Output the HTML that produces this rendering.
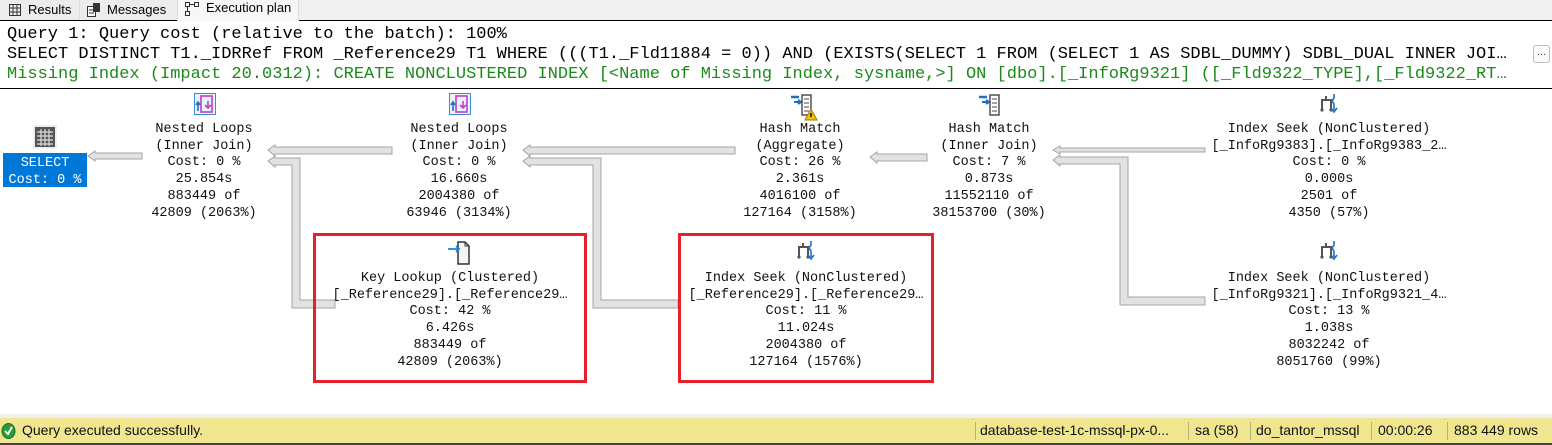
<!DOCTYPE html>
<html><head><meta charset="utf-8"><style>
*{margin:0;padding:0;box-sizing:border-box}
body{width:1552px;height:445px;overflow:hidden;background:#fff;position:relative;font-family:"Liberation Sans",sans-serif}
.tabs{position:absolute;left:0;top:0;width:1552px;height:21px;background:#f0f0f0;border-bottom:1px solid #000}
.tab{position:absolute;top:0;height:20px;font-size:13px;line-height:19px;color:#000}
.hdr{position:absolute;left:7px;font-family:"Liberation Mono",monospace;font-size:17px;white-space:pre;line-height:20px}
.n{position:absolute;width:260px;text-align:center;font-family:"Liberation Mono",monospace;font-size:13.5px;line-height:16.7px;color:#111;white-space:pre}
.ic{position:absolute}
.rb{position:absolute;border:3px solid #e8202a}
.st{position:absolute;left:0;top:418px;width:1552px;height:25px;background:#efe68f;font-size:14px;line-height:25px;color:#111}
.sep{position:absolute;top:4px;height:18px;border-left:1px solid #b8b07a}
</style></head><body>
<div class="tabs">
 <div class="tab" style="left:0;width:80px;background:#ececec;border-right:1px solid #ddd">
  <svg style="position:absolute;left:9px;top:4px" width="12" height="12"><rect x="0.5" y="0.5" width="11" height="11" fill="none" stroke="#333"/><path d="M0 4H12M0 8H12M4 0V12M8 0V12" stroke="#333"/></svg>
  <span style="position:absolute;left:28px">Results</span></div>
 <div class="tab" style="left:80px;width:97px;background:#ececec">
  <svg style="position:absolute;left:7px;top:3px" width="14" height="14"><rect x="0.5" y="3.5" width="8" height="10" fill="#fff" stroke="#333"/><rect x="6" y="0" width="7" height="9" fill="#333"/><path d="M2 7H7M2 10H7" stroke="#333"/></svg>
  <span style="position:absolute;left:27px">Messages</span></div>
 <div class="tab" style="left:177px;width:122px;background:#f7f7f7;height:21px;border-left:1px solid #ddd;border-right:1px solid #ddd">
  <svg style="position:absolute;left:7px;top:2px" width="14" height="14"><rect x="0.5" y="0.5" width="4" height="4" fill="none" stroke="#333"/><rect x="9.5" y="0.5" width="4" height="4" fill="none" stroke="#333"/><rect x="0.5" y="9.5" width="4" height="4" fill="none" stroke="#333"/><path d="M5 2.5H9M2.5 5V9" stroke="#333"/></svg>
  <span style="position:absolute;left:28px;top:-2px">Execution plan</span></div>
</div>
<div class="hdr" style="top:25px">Query 1: Query cost (relative to the batch): 100%</div>
<div class="hdr" style="top:45px">SELECT DISTINCT T1._IDRRef FROM _Reference29 T1 WHERE (((T1._Fld11884 = 0)) AND (EXISTS(SELECT 1 FROM (SELECT 1 AS SDBL_DUMMY) SDBL_DUAL INNER JOI…</div>
<div class="hdr" style="top:65px;color:#1a8a1a">Missing Index (Impact 20.0312): CREATE NONCLUSTERED INDEX [&lt;Name of Missing Index, sysname,&gt;] ON [dbo].[_InfoRg9321] ([_Fld9322_TYPE],[_Fld9322_RT…</div>
<div style="position:absolute;left:1533px;top:45px;width:17px;height:18px;border:1px solid #bbb;border-radius:3px;background:#fafafa;font-size:10px;text-align:center;line-height:14px;color:#333">…</div>
<div style="position:absolute;left:0;top:88px;width:1552px;height:1px;background:#000"></div>

<svg style="position:absolute;left:0;top:0" width="1552" height="420">
<g fill="#e2e2e2" stroke="#a4a4a4" stroke-width="1">
 <polygon points="88,156 95,151 95,153 142,153 142,159 95,159 95,161"/>
 <polygon points="268,150 275,145 275,147 392,147 392,154 275,154 275,156"/>
 <polygon points="268,161 275,156 275,158 300,158 300,300 335,300 335,308 292,308 292,165 275,165 275,167"/>
 <polygon points="523,150 530,145 530,147 735,147 735,154 530,154 530,156"/>
 <polygon points="523,161 530,156 530,158 601,158 601,300 678,300 678,308 593,308 593,165 530,165 530,167"/>
 <polygon points="870,157 877,152 877,154 927,154 927,161 877,161 877,163"/>
 <polygon points="1053,150 1060,146 1060,148 1205,148 1205,152 1060,152 1060,154"/>
 <polygon points="1053,160 1060,155 1060,157 1128,157 1128,297 1205,297 1205,305 1120,305 1120,164 1060,164 1060,166"/>
</g>
</svg>

<!-- SELECT -->
<svg class="ic" style="left:33px;top:125px" width="24" height="24"><rect x="0" y="0" width="24" height="24" fill="#eee"/><rect x="2" y="2" width="20" height="20" fill="#555"/><path d="M4 7H20M4 11H20M4 15H20M4 19H20M8 4V21M12 4V21M16 4V21" stroke="#ddd" stroke-width="1.2"/></svg>
<div style="position:absolute;left:3px;top:153px;width:84px;height:34px;background:#0078d7"></div>
<div class="n" style="left:-85px;top:156px;color:#fff">SELECT
Cost: 0 %</div>

<svg class="ic" style="left:194px;top:93px" width="22" height="22"><rect x="0.5" y="0.5" width="21" height="21" fill="#eaf3fb" stroke="#3a8ad6"/><rect x="7" y="3" width="11" height="16" fill="none" stroke="#c040c0" stroke-width="1.6"/><path d="M14 8V14M11 12L14 15L17 12" stroke="#c040c0" stroke-width="1.6" fill="none"/><path d="M4 18V10M2 12L4 9L6 12" stroke="#1f6fc5" stroke-width="1.6" fill="none"/></svg>
<svg class="ic" style="left:449px;top:93px" width="22" height="22"><rect x="0.5" y="0.5" width="21" height="21" fill="#eaf3fb" stroke="#3a8ad6"/><rect x="7" y="3" width="11" height="16" fill="none" stroke="#c040c0" stroke-width="1.6"/><path d="M14 8V14M11 12L14 15L17 12" stroke="#c040c0" stroke-width="1.6" fill="none"/><path d="M4 18V10M2 12L4 9L6 12" stroke="#1f6fc5" stroke-width="1.6" fill="none"/></svg>
<div class="n" style="left:74px;top:122px">Nested Loops
(Inner Join)
Cost: 0 %
25.854s
883449 of
42809 (2063%)</div>
<div class="n" style="left:329px;top:122px">Nested Loops
(Inner Join)
Cost: 0 %
16.660s
2004380 of
63946 (3134%)</div>

<svg class="ic" style="left:790px;top:94px" width="28" height="28"><path d="M1 3H9" stroke="#1f6fc5" stroke-width="2.5"/><path d="M4 8H10M8 6L11 8L8 10" stroke="#1f6fc5" stroke-width="2" fill="none"/><rect x="12" y="1" width="9" height="20" fill="#fff" stroke="#444" stroke-width="1.4"/><path d="M14 5H19M14 9H19M14 13H19M14 17H19" stroke="#444"/><path d="M15 26L21 15L27 26Z" fill="#f5c400" stroke="#9a7a00"/><path d="M21 19V23" stroke="#000" stroke-width="1.5"/></svg>
<svg class="ic" style="left:978px;top:94px" width="24" height="24"><path d="M1 3H9" stroke="#1f6fc5" stroke-width="2.5"/><path d="M4 8H10M8 6L11 8L8 10" stroke="#1f6fc5" stroke-width="2" fill="none"/><rect x="12" y="1" width="9" height="20" fill="#fff" stroke="#444" stroke-width="1.4"/><path d="M14 5H19M14 9H19M14 13H19M14 17H19" stroke="#444"/></svg>
<div class="n" style="left:670px;top:122px">Hash Match
(Aggregate)
Cost: 26 %
2.361s
4016100 of
127164 (3158%)</div>
<div class="n" style="left:859px;top:122px">Hash Match
(Inner Join)
Cost: 7 %
0.873s
11552110 of
38153700 (30%)</div>

<svg class="ic" style="left:1319px;top:93px" width="20" height="22"><path d="M3 17V7H12V17M7 7V3" stroke="#555" stroke-width="2" fill="none"/><circle cx="3" cy="17" r="1.6" fill="#555"/><circle cx="12" cy="17" r="1.6" fill="#555"/><path d="M15 1V5L13 8L15 11V17M12 15L15 19L18 15" stroke="#1f6fc5" stroke-width="1.6" fill="none"/></svg>
<svg class="ic" style="left:1319px;top:240px" width="20" height="22"><path d="M3 17V7H12V17M7 7V3" stroke="#555" stroke-width="2" fill="none"/><circle cx="3" cy="17" r="1.6" fill="#555"/><circle cx="12" cy="17" r="1.6" fill="#555"/><path d="M15 1V5L13 8L15 11V17M12 15L15 19L18 15" stroke="#1f6fc5" stroke-width="1.6" fill="none"/></svg>
<svg class="ic" style="left:796px;top:240px" width="20" height="22"><path d="M3 17V7H12V17M7 7V3" stroke="#555" stroke-width="2" fill="none"/><circle cx="3" cy="17" r="1.6" fill="#555"/><circle cx="12" cy="17" r="1.6" fill="#555"/><path d="M15 1V5L13 8L15 11V17M12 15L15 19L18 15" stroke="#1f6fc5" stroke-width="1.6" fill="none"/></svg>
<div class="n" style="left:1199px;top:122px">Index Seek (NonClustered)
[_InfoRg9383].[_InfoRg9383_2…
Cost: 0 %
0.000s
2501 of
4350 (57%)</div>
<div class="n" style="left:1199px;top:271px">Index Seek (NonClustered)
[_InfoRg9321].[_InfoRg9321_4…
Cost: 13 %
1.038s
8032242 of
8051760 (99%)</div>

<svg class="ic" style="left:446px;top:241px" width="24" height="24"><path d="M12 1H19L23 5V23H12Z" fill="#f4f4f4" stroke="#333" stroke-width="1.5"/><path d="M19 1V5H23" fill="none" stroke="#333"/><path d="M2 8H13M10 5L13 8L10 11" stroke="#1f80d0" stroke-width="1.8" fill="none"/></svg>
<div class="n" style="left:320px;top:271px">Key Lookup (Clustered)
[_Reference29].[_Reference29…
Cost: 42 %
6.426s
883449 of
42809 (2063%)</div>
<div class="n" style="left:676px;top:271px">Index Seek (NonClustered)
[_Reference29].[_Reference29…
Cost: 11 %
11.024s
2004380 of
127164 (1576%)</div>

<div class="rb" style="left:313px;top:233px;width:274px;height:150px"></div>
<div class="rb" style="left:678px;top:233px;width:256px;height:150px"></div>

<div style="position:absolute;left:0;top:414px;width:1552px;height:4px;background:#f0f0f0"></div>
<div class="st">
 <svg style="position:absolute;left:1px;top:5px" width="15" height="16"><ellipse cx="7.5" cy="8" rx="6.5" ry="7.5" fill="#2f9a3a" stroke="#1d6e25"/><path d="M4 8L7 11L11 4" stroke="#fff" stroke-width="1.8" fill="none"/></svg>
 <span style="position:absolute;left:22px">Query executed successfully.</span>
 <div class="sep" style="left:975px"></div><span style="position:absolute;left:980px">database-test-1c-mssql-px-0...</span>
 <div class="sep" style="left:1188px"></div><span style="position:absolute;left:1195px">sa (58)</span>
 <div class="sep" style="left:1250px"></div><span style="position:absolute;left:1256px">do_tantor_mssql</span>
 <div class="sep" style="left:1371px"></div><span style="position:absolute;left:1378px">00:00:26</span>
 <div class="sep" style="left:1447px"></div><span style="position:absolute;left:1454px">883 449 rows</span>
</div>
<div style="position:absolute;left:0;top:443px;width:1552px;height:2px;background:#3c4456"></div>
</body></html>
